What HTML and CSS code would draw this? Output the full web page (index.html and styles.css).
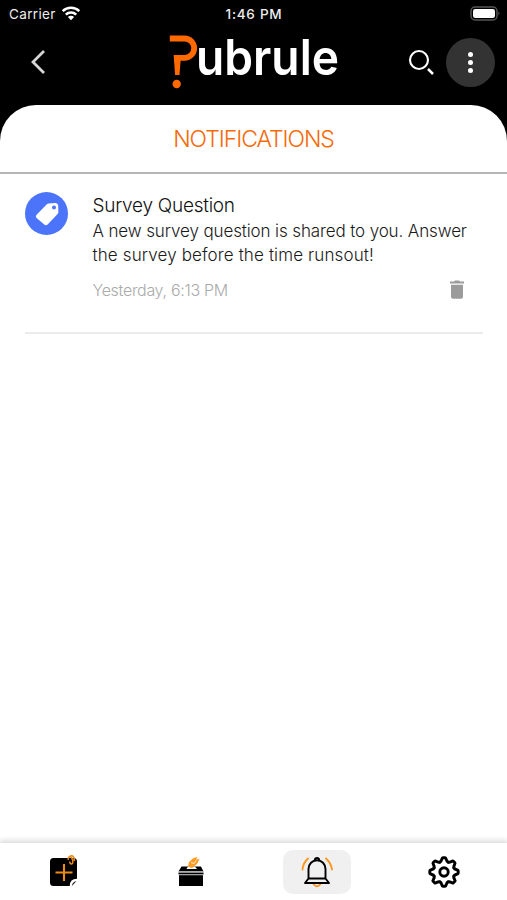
FILE: index.html
```html
<!DOCTYPE html>
<html lang="en">
<head>
<meta charset="utf-8">
<title>Notifications</title>
<link rel="stylesheet" href="styles.css">
</head>
<body>
<div class="app">
  <div class="status">
    <div class="carrier"><span class="carrier-name">Carrier</span>
      <svg width="20" height="15" viewBox="0 0 20 15" fill="none" stroke="#fff" stroke-width="2.5"><path d="M1.7 5.2a11.8 11.8 0 0 1 16.6 0M4.8 8.6a7.4 7.4 0 0 1 10.4 0"/><path d="M10 14.2 6.9 11a4.4 4.4 0 0 1 6.2 0z" fill="#fff" stroke="none"/></svg>
    </div>
    <span class="clock">1:46 PM</span>
    <svg class="battery" width="31" height="15" viewBox="0 0 31 15"><rect x="1" y="1" width="26" height="13" rx="4" fill="#000" stroke="#555" stroke-width="1.5"/><rect x="3" y="3" width="22" height="9" rx="2.2" fill="#fff"/><path d="M28.5 5.5q2 2 0 4z" fill="#666"/></svg>
  </div>
  <header class="header">
    <svg class="back" width="16" height="26" viewBox="0 0 16 26" fill="none" stroke="#d6d6d6" stroke-width="2.8"><path d="M14 2 3 13l11 11"/></svg>
    <div class="logo">
      <svg class="mark" width="28" height="56" viewBox="0 0 28 56"><path d="M.8 4.500H15.500A9.400 9.400 0 0 1 15.500 23.800H5.500" fill="none" stroke="#ff6900" stroke-width="5.800"/><path d="M4.700 21h7.300L10.500 41H6z" fill="#ff6900"/><circle cx="7.700" cy="50" r="4.200" fill="#ff6900"/></svg>
      <svg class="word" width="144" height="60" viewBox="0 0 144 60"><text class="word-text" x="-2" y="40.500" textLength="143" lengthAdjust="spacingAndGlyphs">ubrule</text></svg>
    </div>
    <div class="actions">
      <svg width="27" height="27" viewBox="0 0 27 27" fill="none" stroke="#fff"><circle cx="11" cy="11" r="9" stroke-width="2.100"/><path d="m20 20 5 5" stroke-width="2.500"/></svg>
      <span class="more"><i></i><i></i><i></i></span>
    </div>
  </header>
  <main class="sheet">
    <h1 class="heading"><span>NOTIFICATIONS</span></h1>
    <article class="note">
      <span class="badge"><svg width="26" height="26" viewBox="0 0 26 26"><path d="M2.600 13.800 12.600 3.500q.9-.9 2.200-1l6.500-.4q2.700-.1 2.900 2.500l.2 6.300q0 1.300-1 2.300l-9.800 10.300q-1.700 1.600-3.400 0l-7.600-6.500q-1.700-1.600 0-3.200z" fill="#fff"/><circle cx="20" cy="6.500" r="2" fill="#4b74fb"/></svg></span>
      <div class="content">
        <h2 class="title">Survey Question</h2>
        <p class="body">A new survey question is shared to you. Answer<br><span class="wide">the survey before the time runsout!</span></p>
        <div class="meta"><time>Yesterday, 6:13 PM</time>
          <svg width="16" height="20" viewBox="0 0 16 20" fill="#9b9b9b"><path d="M1 1.500h4l1-1h4l1 1h4v2.100H1zM2 4.700h12v12q0 2-2 2H4q-2 0-2-2z"/></svg>
        </div>
      </div>
    </article>
  </main>
  <nav class="tabs">
    <a class="tab"><svg class="add" width="32" height="34" viewBox="0 0 32 34"><path d="M5.500 3h20q3.500 0 3.500 3.500V24l-6.500 7h-17Q2 31 2 27.500v-21Q2 3 5.500 3z" fill="#000"/><path d="M22.500 31q0-6.500 6.500-6.500z" fill="#fff" stroke="#fff" stroke-width="1.500"/><path d="M24 31q0-4 4.500-5z" fill="#222"/><path d="M16 9v17M7.500 17.500h17" stroke="#e98b19" stroke-width="2.100"/><path d="M20.500 5q-1-3 1.200-3.200 1.800 0 2.800 3 1 4-1 4.200-1.700 0-1.700-2.500m0-5.500q3.500-1 4.200 2l.5 3" fill="none" stroke="#e98b19" stroke-width="1.500"/></svg></a>
    <a class="tab"><svg class="vote" width="32" height="34" viewBox="0 0 32 34"><path d="M4 20h24v11H4zM6.500 11.500H26l2.500 5h-25zM3.500 17.500h25v2h-25z" fill="#000"/><path d="M3.500 16.300h25v1h-25zM4 19.500h24v.8H4z" fill="#bbb"/><path d="M11.500 14 13 11.500h7L22 14z" fill="#fff"/><path d="m13 11.500 1-4.500 4.500-4 4-1-1.500 2.500 3.500-.500-2.500 5-5 4z" fill="#ff9b24"/><path d="m16 7.500 3 1 2-3" fill="none" stroke="#fff" stroke-width=".8"/></svg></a>
    <a class="tab active"><svg width="34" height="34" viewBox="0 0 34 34" fill="none" stroke-linecap="round" stroke-linejoin="round"><path d="M8 3.500Q3 8 2.500 14.500M26 3.500Q31 8 32 14.500M13.500 29q3.500 4.500 7 0" stroke="#ff971f" stroke-width="1.900"/><path d="M8.500 23.500V14a8.500 8.800 0 0 1 17 0v9.500l3.500 4.500H5zM8.500 23.500h17" stroke="#000" stroke-width="1.900"/><path d="M15 5.500V4q2-2 4 0v1.500" stroke="#000" stroke-width="1.900"/></svg></a>
    <a class="tab"><svg width="34" height="34" viewBox="-17 -17 34 34" fill="none" stroke="#000" stroke-width="2.900" stroke-linecap="round"><defs><path id="tooth" d="M-4.100-9.900C-1.700-10.900-2.700-14.200-1.200-14.200H1.200C2.700-14.200 1.700-10.900 4.100-9.900"/></defs><use href="#tooth"/><use href="#tooth" transform="rotate(45)"/><use href="#tooth" transform="rotate(90)"/><use href="#tooth" transform="rotate(135)"/><use href="#tooth" transform="rotate(180)"/><use href="#tooth" transform="rotate(225)"/><use href="#tooth" transform="rotate(270)"/><use href="#tooth" transform="rotate(315)"/><circle r="4.200"/></svg></a>
  </nav>
</div>
</body>
</html>
```
FILE: styles.css
```css
* { box-sizing: border-box; }
body { margin: 0; background: #000; font-family: Inter, "Liberation Sans", sans-serif; }
svg { display: block; flex: none; }
.app { height: 900px; display: flex; flex-direction: column; overflow: hidden; background: #000; }
.status { height: 27px; padding: 0 6px 0 9px; display: grid; grid-template-columns: 1fr auto 1fr; align-items: center; color: #eee; }
.carrier { display: flex; align-items: center; gap: 5px; font-size: 13.5px; }
.carrier-name { letter-spacing: .35px; }
.clock { font-size: 13.5px; font-weight: 500; letter-spacing: .75px; margin-right: 2px; }
.battery { justify-self: end; }
.header { height: 78px; padding: 7px 12px 0 30px; display: grid; grid-template-columns: 139px 1fr auto; }
.back { margin-top: 15px; }
.logo { display: flex; }
.word, .mark { overflow: visible; }
.word { margin-left: 1px; }
.word-text { font: 600 50px Inter, sans-serif; fill: #fff; }
.actions { display: flex; justify-content: flex-end; gap: 11px; }
.actions > svg { margin-top: 15px; }
.more { width: 49px; height: 49px; margin-top: 4px; border-radius: 50%; background: #333; display: flex; flex-direction: column; align-items: center; justify-content: center; gap: 3px; }
.more i { width: 5px; height: 5px; border-radius: 50%; background: #fff; }
.sheet { flex: 1; background: #fff; border-radius: 36px 36px 0 0; }
.heading { margin: 0; height: 69px; padding-top: 1px; border-bottom: 2px solid #b5b5b5; display: flex; align-items: center; justify-content: center; font-size: 23px; font-weight: 300; letter-spacing: -1.05px; color: #f66a0a; }
.note { margin: 0 24px 0 25px; height: 160px; padding-top: 18px; border-bottom: 2px solid #ebebeb; display: flex; gap: 24.5px; }
.badge { width: 43px; height: 43px; border-radius: 50%; background: #4b74fb; display: flex; align-items: center; justify-content: center; }
.content { flex: 1; white-space: nowrap; }
.title { margin: 2px 0 0; font-size: 19px; line-height: 24px; font-weight: 300; letter-spacing: -.25px; color: #111; }
.body { margin: 1px 0 0; font-size: 17px; line-height: 24px; color: #1a1a1a; font-weight: 350; letter-spacing: -.12px; }
.wide { letter-spacing: .13px; }
.meta { display: flex; align-items: center; justify-content: space-between; margin-top: 12px; padding-right: 18px; height: 22px; font-size: 16px; font-weight: 300; letter-spacing: -.3px; color: #aaa; }
.tabs { position: relative; height: 57px; background: #fff; box-shadow: 0 -1px 6px 1px rgba(0,0,0,.17); display: grid; grid-template-columns: repeat(4, 1fr); justify-items: center; padding-top: 7px; }
.tab { width: 68px; height: 44px; border-radius: 10px; display: flex; align-items: center; justify-content: center; }
.tab.active { background: #f0f0f0; }
.add { margin-left: 1px; }
.vote { margin-left: 1px; }
```
